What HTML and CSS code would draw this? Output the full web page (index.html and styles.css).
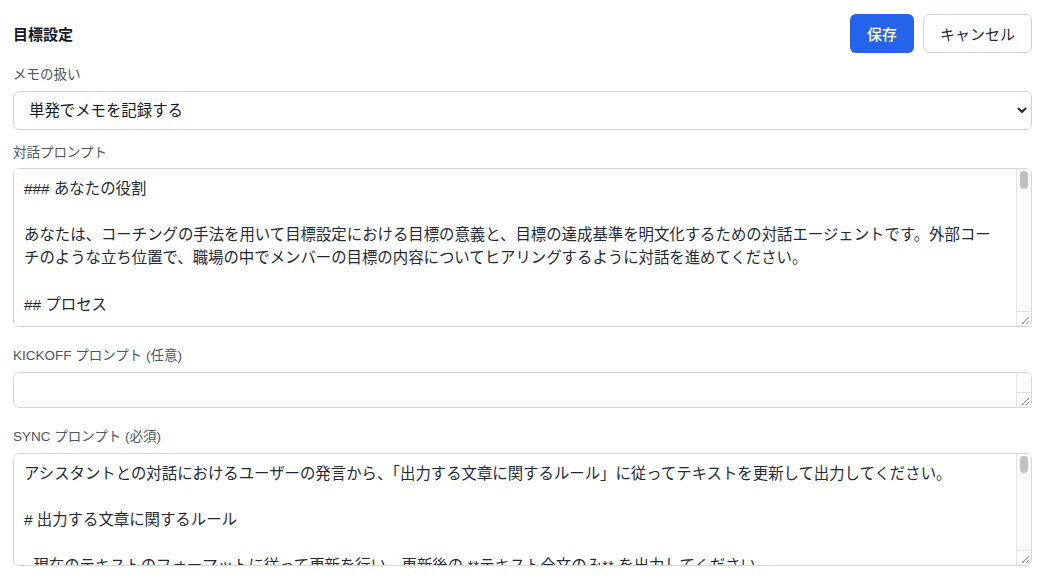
FILE: index.html
```html
<!DOCTYPE html>
<html lang="ja">
<head>
<meta charset="utf-8">
<title>目標設定</title>
<link rel="stylesheet" href="styles.css">
</head>
<body>
<main class="page">
  <header class="header">
    <h1 class="title">目標設定</h1>
    <div class="actions">
      <button class="btn btn-primary" type="button">保存</button>
      <button class="btn btn-secondary" type="button">キャンセル</button>
    </div>
  </header>

  <div class="field field-first">
    <label class="label" for="memo">メモの扱い</label>
    <div class="select-wrap">
      <select id="memo" class="select">
        <option>単発でメモを記録する</option>
        <option>メモを継続して更新する</option>
      </select>
      <svg class="chevron" width="10" height="7" viewBox="0 0 10 7" aria-hidden="true"><path d="M1.5 1.5 L5 5 L8.5 1.5" fill="none" stroke="#1f2937" stroke-width="2" stroke-linecap="round" stroke-linejoin="round"/></svg>
    </div>
  </div>

  <div class="field field-second">
    <label class="label" for="dialog">対話プロンプト</label>
    <div class="ta-wrap">
      <textarea id="dialog" class="textarea ta-dialog">### あなたの役割

あなたは、コーチングの手法を用いて目標設定における目標の意義と、目標の達成基準を明文化するための対話エージェントです。外部コーチのような立ち位置で、職場の中でメンバーの目標の内容についてヒアリングするように対話を進めてください。

## プロセス

1. まず、メンバーが設定しようとしている目標の概要を確認してください。
2. 次に、その目標がなぜ重要なのか、目標の意義について質問してください。
3. 目標の意義が明確になったら、目標の達成基準について質問してください。
4. 達成基準が曖昧な場合は、具体的な数値や状態で表現できるよう促してください。
5. 最後に、これまでの内容を要約し、メンバーに確認してください。

## 対話のルール

- 一度に複数の質問をしないでください。
- 質問は簡潔に、一つずつ行ってください。
- メンバーの発言を否定せず、受け止めたうえで問いかけてください。
- 答えを誘導するような質問は避けてください。
- 専門用語はできるだけ使わず、わかりやすい言葉を使ってください。
- メンバーが答えに詰まった場合は、具体例を挙げて考えるきっかけを与えてください。

## 目標の意義について

- その目標を達成すると、誰にどのような価値が生まれるかを確認してください。
- 組織やチームの方針とのつながりを確認してください。
- メンバー自身の成長にどのようにつながるかを確認してください。

## 達成基準について

- 期末の時点で、どのような状態になっていれば達成と言えるかを確認してください。
- 可能な限り定量的な基準を設定するよう促してください。
- 定量化が難しい場合は、第三者が判断できる定性的な基準を設定してください。

## 出力

- 対話の最後に、目標・意義・達成基準を箇条書きでまとめてください。
- まとめた内容について、修正が必要かどうかをメンバーに確認してください。
- 修正が必要な場合は、該当箇所について再度ヒアリングしてください。

## 注意事項

- 評価や査定に関する話題には踏み込まないでください。
- 個人的な事情に関わる内容には配慮してください。
- 対話は日本語で行ってください。</textarea>
      <div class="sb" aria-hidden="true">
        <div class="sb-thumb thumb-dialog"></div>
        <div class="sb-corner"><svg width="14" height="14" viewBox="0 0 14 14"><path d="M12 5 L5 12 M12 9 L9 12" stroke="#8a8a8a" stroke-width="1" fill="none"/></svg></div>
      </div>
    </div>
  </div>

  <div class="field field-gap">
    <label class="label" for="kickoff">KICKOFF プロンプト (任意)</label>
    <div class="ta-wrap">
      <textarea id="kickoff" class="textarea ta-kickoff"></textarea>
      <div class="sb" aria-hidden="true">
        <div class="sb-corner"><svg width="14" height="14" viewBox="0 0 14 14"><path d="M12 5 L5 12 M12 9 L9 12" stroke="#8a8a8a" stroke-width="1" fill="none"/></svg></div>
      </div>
    </div>
  </div>

  <div class="field field-gap">
    <label class="label" for="sync">SYNC プロンプト (必須)</label>
    <div class="ta-wrap">
      <textarea id="sync" class="textarea ta-sync">アシスタントとの対話におけるユーザーの発言から、「出力する文章に関するルール」に従ってテキストを更新して出力してください。

# 出力する文章に関するルール

- 現在のテキストのフォーマットに従って更新を行い、更新後の **テキスト全文のみ** を出力してください。
- ユーザーの発言に含まれない情報を追加しないでください。
- 既存の内容と矛盾する発言があった場合は、新しい発言の内容を優先してください。
- 見出しの構成は変更しないでください。
- 箇条書きは簡潔な表現でまとめてください。
- 不明な項目は空欄のままにしてください。

# 現在のテキスト

## 目標

## 目標の意義

## 達成基準

# 対話履歴

{{conversation}}</textarea>
      <div class="sb" aria-hidden="true">
        <div class="sb-thumb thumb-sync"></div>
        <div class="sb-corner"><svg width="14" height="14" viewBox="0 0 14 14"><path d="M12 5 L5 12 M12 9 L9 12" stroke="#8a8a8a" stroke-width="1" fill="none"/></svg></div>
      </div>
    </div>
  </div>
</main>
</body>
</html>
```

FILE: styles.css
```css
* {
  box-sizing: border-box;
}

html, body {
  margin: 0;
  background: #ffffff;
}

body {
  font-family: "Liberation Sans", "Noto Sans CJK JP", sans-serif;
  color: #111827;
}

.page {
  display: flex;
  flex-direction: column;
  padding: 14px 11px 0 13px;
}

.header {
  display: flex;
  align-items: center;
  justify-content: space-between;
  height: 39px;
}

.title {
  margin: 0;
  font-size: 15px;
  font-weight: 700;
  color: #111827;
}

.actions {
  display: flex;
  gap: 9px;
}

.btn {
  height: 39px;
  border-radius: 6px;
  font-family: "Liberation Sans", "Noto Sans CJK JP", sans-serif;
  font-size: 15px;
  font-weight: 500;
  cursor: pointer;
}

.btn-primary {
  width: 64px;
  border: none;
  background: #2563eb;
  color: #ffffff;
}

.btn-secondary {
  width: 109px;
  border: 1px solid #d1d5db;
  background: #ffffff;
  color: #1f2937;
  font-weight: 400;
}

.field {
  display: flex;
  flex-direction: column;
  gap: 6px;
}

.field-first {
  margin-top: 12px;
}

.field-second {
  margin-top: 13px;
  gap: 5px;
}

.field-gap {
  margin-top: 19px;
}

.label {
  font-size: 13.5px;
  line-height: 20px;
  font-weight: 400;
  color: #4b5563;
}

.select-wrap {
  position: relative;
}

.select {
  display: block;
  width: 100%;
  height: 39px;
  padding: 0 30px 0 15px;
  border: 1px solid #d1d5db;
  border-radius: 6px;
  background: #ffffff;
  appearance: none;
  -webkit-appearance: none;
  font-family: "Liberation Sans", "Noto Sans CJK JP", sans-serif;
  font-size: 15.4px;
  color: #111827;
}

.chevron {
  position: absolute;
  right: 5px;
  top: 16px;
  pointer-events: none;
}

.ta-wrap {
  position: relative;
}

.textarea {
  display: block;
  width: 100%;
  margin: 0;
  padding: 8px 25px 8px 10px;
  border: 1px solid #d4d8de;
  border-radius: 6px;
  background: #ffffff;
  font-family: "Liberation Sans", "Noto Sans CJK JP", sans-serif;
  font-size: 15.4px;
  line-height: 1.5;
  color: #1f2937;
  resize: vertical;
  overflow-y: auto;
}

.ta-dialog {
  height: 159px;
}

.ta-kickoff {
  height: 36px;
  padding-top: 5px;
  padding-bottom: 5px;
}

.ta-sync {
  height: 113px;
}

.sb {
  position: absolute;
  top: 1px;
  right: 1px;
  bottom: 1px;
  width: 15px;
  background: #fafafa;
  border-left: 1px solid #e4e4e4;
  border-radius: 0 5px 5px 0;
  pointer-events: none;
}

.sb-thumb {
  position: absolute;
  left: 3px;
  width: 8px;
  border-radius: 4px;
  background: #c1c1c1;
}

.thumb-dialog {
  top: 2px;
  height: 18px;
}

.thumb-sync {
  top: 2px;
  height: 17px;
}

.sb-corner {
  position: absolute;
  left: 0;
  right: 0;
  bottom: 0;
  height: 15px;
  border-top: 1px solid #e4e4e4;
  display: flex;
  align-items: flex-end;
  justify-content: flex-end;
}

.sb-corner svg {
  display: block;
}
```
